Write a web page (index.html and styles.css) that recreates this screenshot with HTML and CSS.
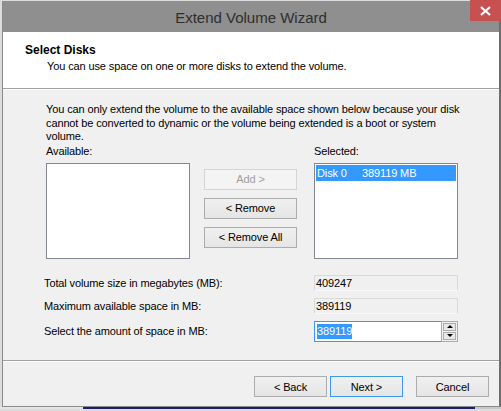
FILE: index.html
```html
<!DOCTYPE html>
<html lang="en">
<head>
    <meta charset="UTF-8">
    <title>Extend Volume Wizard</title>
    <link rel="stylesheet" href="styles.css">
</head>
<body>
    <div class="window">
        <div class="titlebar">
            <span class="title">Extend Volume Wizard</span>
            <div class="close">
                <svg width="11" height="10" viewBox="0 0 11 10">
                    <path d="M1 1 L10 9 M10 1 L1 9" stroke="#fff" stroke-width="2.2" fill="none"/>
                </svg>
            </div>
        </div>
        <div class="header">
            <div class="heading">Select Disks</div>
            <div class="subheading">You can use space on one or more disks to extend the volume.</div>
        </div>
        <div class="content">
            <p class="note">You can only extend the volume to the available space shown below because your disk cannot be converted to dynamic or the volume being extended is a boot or system volume.</p>
            <div class="pickers">
                <div class="picker">
                    <div class="caption">Available:</div>
                    <div class="listbox"></div>
                </div>
                <div class="moves">
                    <button class="btn" disabled>Add &gt;</button>
                    <button class="btn">&lt; Remove</button>
                    <button class="btn">&lt; Remove All</button>
                </div>
                <div class="picker">
                    <div class="caption">Selected:</div>
                    <div class="listbox">
                        <div class="item selected"><span class="disk">Disk 0</span><span>389119 MB</span></div>
                    </div>
                </div>
            </div>
            <div class="sizes">
                <div class="size-label">Total volume size in megabytes (MB):</div>
                <div class="readonly">409247</div>
                <div class="size-label">Maximum available space in MB:</div>
                <div class="readonly">389119</div>
                <div class="size-label">Select the amount of space in MB:</div>
                <div class="spin">
                    <div class="spin-field"><span class="highlight">389119</span></div>
                    <div class="spin-buttons">
                        <div class="spin-btn"><span class="arrow up"></span></div>
                        <div class="spin-btn"><span class="arrow down"></span></div>
                    </div>
                </div>
            </div>
        </div>
        <div class="footer">
            <button class="btn nav">&lt; Back</button>
            <button class="btn nav default">Next &gt;</button>
            <button class="btn nav cancel">Cancel</button>
        </div>
    </div>
    <div class="desk-strip">
        <span class="strip-a"></span>
        <span class="strip-b"></span>
        <span class="strip-c"></span>
    </div>
</body>
</html>
```

FILE: styles.css
```css
html, body {
    margin: 0;
    padding: 0;
}
body {
    width: 501px;
    height: 411px;
    overflow: hidden;
    background: #dcdcdc;
    font-family: 'Liberation Sans', Arial, sans-serif;
    font-size: 11px;
    letter-spacing: -0.12px;
    color: #000;
}
.window {
    position: relative;
    margin: 1px 0 0 2px;
    width: 496px;
    border-left: 1px solid #8a8a8a;
    border-right: 2px solid #6e6e6e;
    border-bottom: 1px solid #8a8a8a;
    background: #f0f0f0;
}
.titlebar {
    height: 31px;
    background: #8f8f8f;
    display: flex;
    align-items: center;
    justify-content: center;
}
.title {
    font-size: 15px;
    letter-spacing: 0;
    color: #2e2e2e;
    margin-top: 1px;
}
.close {
    position: absolute;
    top: -1px;
    right: -2px;
    width: 31px;
    height: 21px;
    background: #c75050;
    display: flex;
    align-items: center;
    justify-content: center;
}
.header {
    height: 57px;
    background: #fff;
    border-bottom: 1px solid #a0a0a0;
    box-shadow: 0 1px 0 #fff;
    box-sizing: border-box;
    padding: 11px 0 0 22px;
}
.heading {
    font-size: 12px;
    letter-spacing: 0;
    font-weight: bold;
    line-height: 15px;
}
.subheading {
    padding-left: 22px;
    line-height: 15px;
    margin-top: 1px;
}
.content {
    height: 272px;
    box-sizing: border-box;
    padding: 14px 0 0 43px;
    border-bottom: 1px solid #a0a0a0;
}
.note {
    margin: 0;
    width: 425px;
    line-height: 13.5px;
}
.pickers {
    display: flex;
    align-items: flex-start;
}
.caption {
    line-height: 14px;
    margin-bottom: 5px;
}
.listbox {
    width: 144px;
    height: 96px;
    box-sizing: border-box;
    border: 1px solid #828790;
    background: #fff;
    padding: 1px;
}
.item {
    height: 16px;
    line-height: 16px;
    display: flex;
    padding-left: 1px;
}
.item.selected {
    background: #3399ff;
    color: #fff;
}
.disk {
    width: 45px;
}
.moves {
    display: flex;
    flex-direction: column;
    gap: 8px;
    margin: 25px 17px 0 14px;
}
.btn {
    font-family: inherit;
    font-size: 11px;
    letter-spacing: inherit;
    color: #000;
    height: 21px;
    padding: 0;
    border: 1px solid #acacac;
    background: linear-gradient(#f0f0f0, #e5e5e5);
    border-radius: 0;
}
.moves .btn {
    width: 93px;
}
.btn:disabled {
    color: #a0a0a0;
    border-color: #d5d5d5;
    background: #f4f4f4;
}
.sizes {
    display: grid;
    grid-template-columns: 270px 144px;
    grid-template-rows: 16px 16px 21px;
    row-gap: 7px;
    align-items: center;
    margin: 16px 0 0 -2px;
}
.size-label {
    line-height: 14px;
}
.readonly {
    height: 16px;
    box-sizing: border-box;
    border: 1px solid #d9d9d9;
    border-bottom-color: #fafafa;
    background: #f0f0f0;
    line-height: 14px;
    padding-left: 1px;
}
.spin {
    display: flex;
    height: 21px;
}
.spin-field {
    width: 127px;
    box-sizing: border-box;
    border: 1px solid #3399ff;
    border-right: none;
    background: #fff;
    padding: 2px 0 0 2px;
}
.highlight {
    background: #3399ff;
    color: #fff;
    line-height: 15px;
    display: inline-block;
}
.spin-buttons {
    width: 17px;
    box-sizing: border-box;
    border: 1px solid #acacac;
    background: #f0f0f0;
    display: flex;
    flex-direction: column;
    gap: 1px;
    padding: 1px;
}
.spin-btn {
    flex: 1;
    border: 1px solid #acacac;
    background: #e8e8e8;
    display: flex;
    align-items: center;
    justify-content: center;
}
.arrow {
    width: 0;
    height: 0;
    border-left: 3px solid transparent;
    border-right: 3px solid transparent;
}
.arrow.up {
    border-bottom: 3px solid #000;
}
.arrow.down {
    border-top: 3px solid #000;
}
.footer {
    height: 45px;
    box-sizing: border-box;
    border-top: 1px solid #fff;
    display: flex;
    justify-content: flex-end;
    padding: 14px 10px 0 0;
    gap: 3px;
}
.nav {
    width: 73px;
}
.nav.default {
    border-color: #3c9ae8;
}
.nav.cancel {
    margin-left: 10px;
}
.desk-strip {
    display: flex;
    height: 2px;
}
.strip-a {
    width: 83px;
    background: #e6e6e6;
}
.strip-b {
    width: 392px;
    background: #1c1f6b;
}
.strip-c {
    flex: 1;
    background: #c8c8c8;
}
```
